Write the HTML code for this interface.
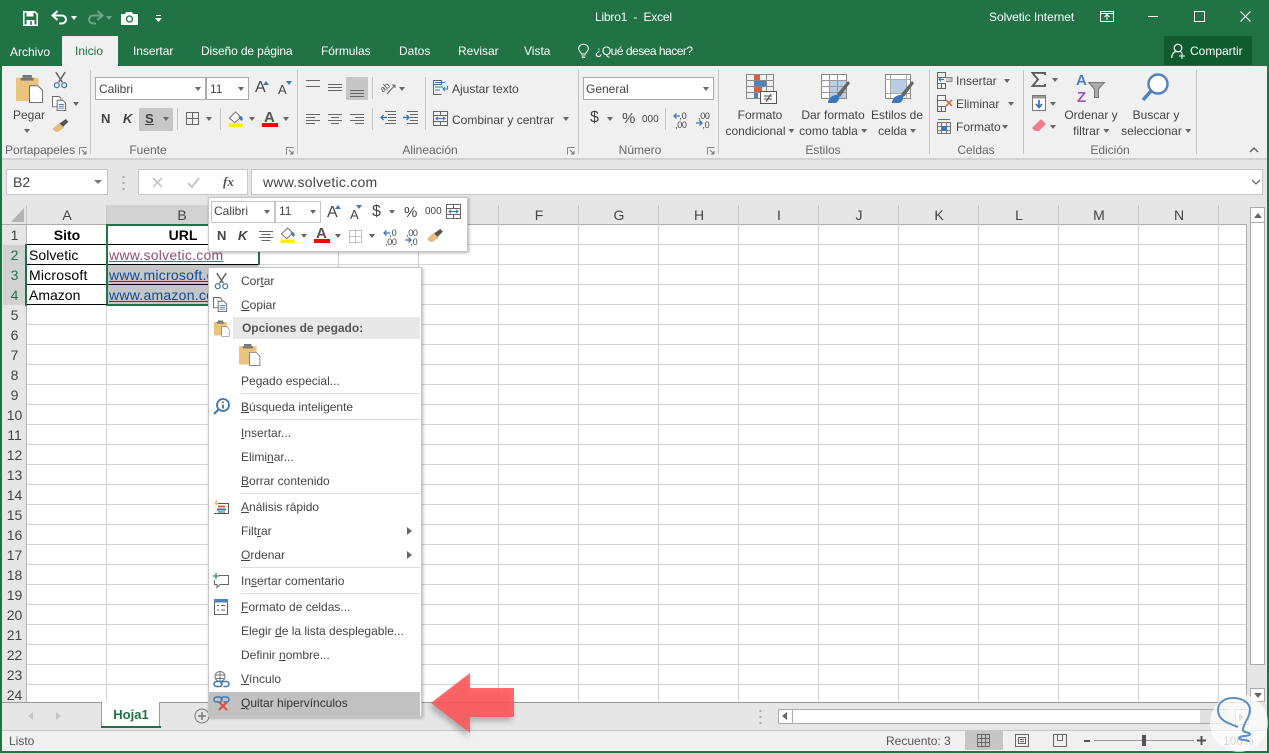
<!DOCTYPE html>
<html lang="es"><head><meta charset="utf-8"><title>Libro1 - Excel</title>
<style>
html,body{margin:0;padding:0;background:#fff}
#p{position:relative;width:1269px;height:753px;overflow:hidden;font:12px/16px "Liberation Sans",sans-serif;color:#444;background:#fff}
.a{position:absolute}
.t{position:absolute;white-space:nowrap}
.c{position:absolute;white-space:nowrap;text-align:center;transform:translateX(-50%)}
.w{color:#fff}
.s{position:absolute;width:1px;background:#c6c6c6}
.b{position:absolute;background:#fff;border:1px solid #ababab;box-sizing:border-box}
.d{position:absolute;width:0;height:0;border-left:3.5px solid transparent;border-right:3.5px solid transparent;border-top:4px solid #666}
.v{position:absolute;width:1px;background:#d4d4d4;top:224px;height:478px}
.r{position:absolute;left:3px;width:23px;height:19px;text-align:center;font-size:14px;line-height:21px;color:#444}
.m{position:absolute;left:241px;white-space:nowrap;color:#444;line-height:16px}
.hr{position:absolute;left:241px;width:179px;height:1px;background:#dcdcdc}
.cell{position:absolute;font-size:14px;line-height:20px;color:#000;white-space:nowrap}
svg{position:absolute;overflow:visible}
</style></head><body><div id="p">
<svg width="0" height="0"><defs>
<symbol id="sc" viewBox="0 0 16 18" overflow="visible"><path d="M3 0 L10 11 M13 0 L6 11" stroke="#666" stroke-width="1.6" fill="none"/><circle cx="4" cy="14" r="2.6" fill="none" stroke="#3e77b5" stroke-width="1.3"/><circle cx="12" cy="14" r="2.6" fill="none" stroke="#3e77b5" stroke-width="1.3"/></symbol>
<symbol id="cp" viewBox="0 0 16 16" overflow="visible"><path d="M.5 .5h7l2 2v9H.5z" fill="#fff" stroke="#666"/><path d="M5.5 4.5h6l3 3v8h-9z" fill="#fff" stroke="#666"/><path d="M7 9h6M7 11h6M7 13h6" stroke="#3e77b5"/></symbol>
<symbol id="pa" viewBox="0 0 30 30" overflow="visible"><path d="M0 3h24v25H0z" fill="#eac47f"/><path d="M7 3h10V0H7z" fill="#777"/><path d="M5 3h14v3H5z" fill="#777"/><path d="M14.500 11.500h9l5 5v13h-14z" fill="#fff" stroke="#666"/></symbol>
<symbol id="br" viewBox="0 0 18 16" overflow="visible"><path d="M0 11 L8 4 L13 10 L6 15 Q2 15 0 11z" fill="#e5bd7e"/><path d="M8 5 L15 0 L18 3 L12 9z" fill="#555"/></symbol>
<symbol id="fl" viewBox="0 0 18 18" overflow="visible"><path d="M1 8 L8 1 L14 7 L7 13z" fill="#fff" stroke="#666"/><path d="M11 6 q5-1 5 3 q0 2-2 2z" fill="#3e77b5"/><rect x="0" y="14" width="16" height="4" fill="#ffef00"/></symbol>
</defs></svg>

<!-- frame -->
<div class="a" style="left:0;top:0;width:1269px;height:66px;background:#217346"></div>
<!-- QAT -->
<svg style="left:23px;top:11px" width="15" height="15"><path d="M.8 .8h11l2.400 2.400v11H.8z" fill="none" stroke="#fff" stroke-width="1.600"/><path d="M3.500 1v4.500h7V1z" fill="#fff"/><path d="M3.500 14V9h8v5z" fill="#fff"/><path d="M8 10v4" stroke="#217346" stroke-width="1.500"/></svg>
<svg style="left:52px;top:11px" width="16" height="14"><path d="M1 4.500h9a4 4 0 0 1 0 8H7" fill="none" stroke="#fff" stroke-width="2"/><path d="M5.500 0 L.5 4.500 L5.500 9" fill="none" stroke="#fff" stroke-width="2"/></svg>
<div class="d" style="left:71px;top:16px;border-top-color:#fff"></div>
<svg style="left:87px;top:11px" width="16" height="14" opacity=".35"><path d="M15 4.500H6a4 4 0 0 0 0 8h3" fill="none" stroke="#fff" stroke-width="2"/><path d="M10.500 0 L15.500 4.500 L10.500 9" fill="none" stroke="#fff" stroke-width="2"/></svg>
<div class="d" style="left:106px;top:16px;border-top-color:#6fa98a"></div>
<svg style="left:121px;top:12px" width="17" height="13"><path d="M0 2h4l1-2h6l1 2h5v11H0z" fill="#fff"/><circle cx="8.500" cy="7" r="3" fill="#fff" stroke="#217346" stroke-width="1.300"/></svg>
<svg style="left:155px;top:15px" width="7" height="7"><path d="M1 .5h5" stroke="#fff"/><path d="M0 3h7L3.500 7z" fill="#fff"/></svg>
<div class="t w" style="left:595px;top:9px;letter-spacing:-.2px">Libro1&nbsp; -&nbsp; Excel</div>
<div class="t w" style="left:989px;top:9px;letter-spacing:-.05px">Solvetic Internet</div>
<svg style="left:1100px;top:11px" width="14" height="11"><path d="M.5 .5h13v10H.5z M.5 2.500h13" fill="none" stroke="#fff"/><path d="M7 9V4M4.500 6 7 3.500 9.500 6" fill="none" stroke="#fff"/></svg>
<div class="a" style="left:1148px;top:16px;width:10px;height:1px;background:#fff"></div>
<div class="a" style="left:1194px;top:11px;width:9px;height:9px;border:1px solid #fff"></div>
<svg style="left:1240px;top:11px" width="11" height="11"><path d="M.5 .5l10 10M10.500 .5l-10 10" stroke="#fff" stroke-width="1.100"/></svg>
<!-- tabs -->
<div class="t w" style="left:10px;top:44px">Archivo</div>
<div class="a" style="left:62px;top:36px;width:56px;height:30px;background:#f0f0f0"></div>
<div class="t" style="left:75px;top:43px;color:#217346">Inicio</div>
<div class="t w" style="left:133px;top:43px;letter-spacing:-.05px">Insertar</div>
<div class="t w" style="left:201px;top:43px;letter-spacing:-.12px">Diseño de página</div>
<div class="t w" style="left:321px;top:43px;letter-spacing:-.05px">Fórmulas</div>
<div class="t w" style="left:399px;top:43px">Datos</div>
<div class="t w" style="left:458px;top:43px">Revisar</div>
<div class="t w" style="left:524px;top:43px">Vista</div>
<svg style="left:578px;top:44px" width="11" height="14"><path d="M3.500 10C3 8 .6 7 .6 4.500a4.900 4.200 0 0 1 9.800 0C10.400 7 8 8 7.500 10z" fill="none" stroke="#fff"/><path d="M3.500 12h4M4 13.500h3" stroke="#fff"/></svg>
<div class="t w" style="left:595px;top:43px;letter-spacing:-.5px">¿Qué desea hacer?</div>
<div class="a" style="left:1164px;top:36px;width:88px;height:29px;background:#0f5c30"></div>
<svg style="left:1171px;top:43px" width="15" height="16"><circle cx="7" cy="5" r="3.800" fill="none" stroke="#fff" stroke-width="1.200"/><path d="M.8 15c0-4 2-6 4-6.500M9 8.500c1 .3 1.500.6 2 1.200" fill="none" stroke="#fff" stroke-width="1.200"/><path d="M8 13h6M11 10v6" stroke="#fff"/></svg>
<div class="t w" style="left:1190px;top:43px">Compartir</div>

<!-- ribbon -->
<div class="a" style="left:0;top:66px;width:1269px;height:92px;background:#f0f0f0"></div>
<div class="a" style="left:0;top:158px;width:1269px;height:2px;background:#d2d2d2"></div>
<div class="s" style="left:90px;top:70px;height:84px"></div>
<div class="s" style="left:297px;top:70px;height:84px"></div>
<div class="s" style="left:578px;top:70px;height:84px"></div>
<div class="s" style="left:718px;top:70px;height:84px"></div>
<div class="s" style="left:929px;top:70px;height:84px"></div>
<div class="s" style="left:1023px;top:70px;height:84px"></div>
<div class="s" style="left:1196px;top:70px;height:84px"></div>
<!-- clipboard -->
<svg style="left:16px;top:74px" width="28" height="30"><use href="#pa" width="28" height="30"/></svg>
<div class="t" style="left:13px;top:107px">Pegar</div>
<div class="d" style="left:24px;top:129px"></div>
<svg style="left:53px;top:72px" width="15" height="17"><use href="#sc" width="15" height="17"/></svg>
<svg style="left:52px;top:96px" width="15" height="15"><use href="#cp" width="15" height="15"/></svg>
<div class="d" style="left:73px;top:102px"></div>
<svg style="left:52px;top:119px" width="17" height="14"><use href="#br" width="17" height="14"/></svg>
<div class="t" style="left:5px;top:142px;color:#666;letter-spacing:-.05px">Portapapeles</div>
<svg style="left:79px;top:147px" width="8" height="8"><path d="M.5 .5h7M.500 .5v7" stroke="#888" fill="none"/><path d="M3 3l4 4M7 4v3H4" stroke="#777" fill="none"/></svg>
<!-- font -->
<div class="b" style="left:95px;top:77px;width:111px;height:23px"></div>
<div class="t" style="left:99px;top:81px">Calibri</div><div class="d" style="left:195px;top:87px"></div>
<div class="b" style="left:206px;top:77px;width:43px;height:23px"></div>
<div class="t" style="left:210px;top:81px">11</div><div class="d" style="left:238px;top:87px"></div>
<div class="t" style="left:255px;top:80px;font-size:16px">A</div><svg style="left:263px;top:81px" width="6" height="4"><path d="M0 4L3 0l3 4z" fill="#3e77b5"/></svg>
<div class="t" style="left:278px;top:82px;font-size:13px">A</div><svg style="left:286px;top:81px" width="6" height="4"><path d="M0 0l3 4 3-4z" fill="#3e77b5"/></svg>
<div class="t" style="left:101px;top:111px;font-weight:bold;font-size:13px">N</div>
<div class="t" style="left:123px;top:111px;font-weight:bold;font-style:italic;font-size:13px">K</div>
<div class="a" style="left:139px;top:108px;width:34px;height:23px;background:#c6c6c6"></div>
<div class="t" style="left:145px;top:111px;font-weight:bold;font-size:13px;text-decoration:underline">S</div>
<div class="d" style="left:163px;top:117px"></div>
<div class="s" style="left:177px;top:108px;height:22px"></div>
<svg style="left:186px;top:112px" width="13" height="13"><path d="M.5 .5h12v12H.5zM6.500 .5v12M.5 6.500h12" fill="none" stroke="#666"/></svg>
<div class="d" style="left:206px;top:117px"></div>
<div class="s" style="left:220px;top:108px;height:22px"></div>
<svg style="left:228px;top:111px" width="17" height="16"><use href="#fl" width="17" height="16"/></svg>
<div class="d" style="left:249px;top:117px"></div>
<div class="t" style="left:264px;top:110px;font-size:15px;font-weight:bold;color:#555">A</div>
<div class="a" style="left:262px;top:123px;width:16px;height:4px;background:#f00"></div>
<div class="d" style="left:283px;top:117px"></div>
<div class="t c" style="left:148px;top:142px;color:#666">Fuente</div>
<svg style="left:286px;top:147px" width="8" height="8"><path d="M.5 .5h7M.500 .5v7" stroke="#888" fill="none"/><path d="M3 3l4 4M7 4v3H4" stroke="#777" fill="none"/></svg>
<!-- align -->
<svg style="left:306px;top:77px" width="70" height="50">
<path d="M0 3.500h14M0 9.500h14" stroke="#666"/>
<path d="M22 7.500h14M22 10.500h14M22 13.500h14" stroke="#666"/>
<rect x="40" y="0" width="22" height="23" fill="#c6c6c6"/>
<path d="M44 13.500h14M44 16.500h14M44 19.500h14" stroke="#666"/>
<path d="M0 37.500h14M0 40.500h9M0 43.500h14M0 46.500h9" stroke="#666"/>
<path d="M22 37.500h14M25 40.500h8M22 43.500h14M25 46.500h8" stroke="#666"/>
<path d="M44 37.500h14M49 40.500h9M44 43.500h14M49 46.500h9" stroke="#666"/></svg>
<div class="s" style="left:372px;top:77px;height:22px"></div>
<div class="s" style="left:372px;top:108px;height:22px"></div>
<svg style="left:380px;top:80px" width="17" height="15"><text x="0" y="11" font-size="9" fill="#555" transform="rotate(-40 4 8)" font-family="Liberation Sans">ab</text><path d="M7 14 L15 5M12 5h3v3" stroke="#666" fill="none"/></svg>
<div class="d" style="left:399px;top:87px"></div>
<svg style="left:380px;top:111px" width="39" height="14">
<path d="M5 .5h11M8 3.500h8M8 6.500h8M8 9.500h8M5 12.500h11" stroke="#666"/><path d="M7 6.500H1M3.500 4L1 6.500 3.500 9" stroke="#3e77b5" fill="none" stroke-width="1.400"/>
<path d="M27 .5h11M30 3.500h8M30 6.500h8M30 9.500h8M27 12.500h11" stroke="#666"/><path d="M23 6.500h6M26.500 4L29 6.500 26.500 9" stroke="#3e77b5" fill="none" stroke-width="1.400"/></svg>
<div class="s" style="left:425px;top:77px;height:53px"></div>
<svg style="left:433px;top:80px" width="16" height="15"><path d="M.5 .5h8v4h-8zM.5 4.500v10h8" fill="none" stroke="#666"/><path d="M2 2.500h10M2 7h8M2 10h5" stroke="#3e77b5"/><path d="M14.500 6v3H10M12 7l-2 2 2 2" stroke="#3e77b5" fill="none"/></svg>
<div class="t" style="left:452px;top:81px">Ajustar texto</div>
<svg style="left:433px;top:111px" width="15" height="15"><path d="M.5 .5h14v14H.5zM.5 4.500h14M.5 10.500h14M7.500 .5v4M7.500 10.500v4" fill="none" stroke="#666"/><path d="M3 7.500h9M5 5.800L3 7.500l2 1.700M10 5.800l2 1.700-2 1.700" stroke="#3e77b5" fill="none"/></svg>
<div class="t" style="left:452px;top:112px">Combinar y centrar</div>
<div class="d" style="left:563px;top:117px"></div>
<div class="t c" style="left:430px;top:142px;color:#666">Alineación</div>
<svg style="left:567px;top:147px" width="8" height="8"><path d="M.5 .5h7M.500 .5v7" stroke="#888" fill="none"/><path d="M3 3l4 4M7 4v3H4" stroke="#777" fill="none"/></svg>
<!-- number -->
<div class="b" style="left:583px;top:77px;width:131px;height:23px"></div>
<div class="t" style="left:586px;top:81px">General</div><div class="d" style="left:703px;top:87px"></div>
<div class="t" style="left:590px;top:110px;font-size:16px">$</div><div class="d" style="left:607px;top:117px"></div>
<div class="t" style="left:622px;top:111px;font-size:15px">%</div>
<div class="t" style="left:642px;top:112px;font-size:10px">000</div>
<div class="s" style="left:665px;top:108px;height:22px"></div>
<div class="t" style="left:675px;top:112px;font-size:9px;line-height:9px;letter-spacing:-.3px">&nbsp;&nbsp;,0<br>,00</div>
<svg style="left:673px;top:113px" width="8" height="6"><path d="M7 3H1M3.500.5L1 3l2.500 2.500" stroke="#3e77b5" fill="none" stroke-width="1.300"/></svg>
<div class="t" style="left:698px;top:112px;font-size:9px;line-height:9px;letter-spacing:-.3px">,00<br>&nbsp;&nbsp;,0</div>
<svg style="left:695px;top:120px" width="8" height="6"><path d="M1 3h6M4.500.5L7 3 4.500 5.500" stroke="#3e77b5" fill="none" stroke-width="1.300"/></svg>
<div class="t c" style="left:640px;top:142px;color:#666">Número</div>
<svg style="left:707px;top:147px" width="8" height="8"><path d="M.5 .5h7M.500 .5v7" stroke="#888" fill="none"/><path d="M3 3l4 4M7 4v3H4" stroke="#777" fill="none"/></svg>
<!-- styles -->
<svg style="left:746px;top:74px" width="31" height="30"><path d="M.5 .5h27v24H.5zM.5 6.500h27M.5 12.500h27M.5 18.500h27M8.500 .5v24M20.500 .5v24" fill="none" stroke="#888"/><rect x="8" y="1" width="6" height="5" fill="#d9603b"/><rect x="8" y="7" width="12" height="5" fill="#4f81bd"/><rect x="8" y="13" width="8" height="5" fill="#d9603b"/><rect x="8" y="19" width="4" height="5" fill="#4f81bd"/><rect x="14.500" y="17.500" width="16" height="12" fill="#fff" stroke="#555"/><path d="M18 22h8M18 25h8M25 20l-5 8" stroke="#444"/></svg>
<div class="c" style="left:760px;top:107px;line-height:16px">Formato<br>condicional<span style="display:inline-block;width:0;height:0;margin-left:3px;border-left:3px solid transparent;border-right:3px solid transparent;border-top:4px solid #666;vertical-align:2px"></span></div>
<svg style="left:821px;top:74px" width="30" height="30"><rect x=".5" y=".5" width="25" height="24" fill="#fff" stroke="#888"/><rect x="8" y="6" width="17" height="18" fill="#b9cde5"/><path d="M.5 6.500h25M.5 12.500h25M.5 18.500h25M8.500 .5v24M16.500 .5v24" stroke="#999" fill="none"/><path d="M16 20 L27 7 L29 9 L19 23z" fill="#666"/><path d="M7 29c0-5 5-9 11-8 1 3-1 8-4 8z" fill="#3e77b5"/></svg>
<div class="c" style="left:833px;top:107px;line-height:16px">Dar formato<br>como tabla<span style="display:inline-block;width:0;height:0;margin-left:3px;border-left:3px solid transparent;border-right:3px solid transparent;border-top:4px solid #666;vertical-align:2px"></span></div>
<svg style="left:885px;top:74px" width="30" height="30"><rect x=".5" y=".5" width="25" height="24" fill="#fff" stroke="#888"/><rect x="5" y="5" width="17" height="14" fill="#b9cde5"/><path d="M.5 5.500h25M.5 19.500h25M5.500 .5v24M21.500 .5v24" stroke="#aaa" fill="none"/><path d="M16 20 L27 7 L29 9 L19 23z" fill="#666"/><path d="M7 29c0-5 5-9 11-8 1 3-1 8-4 8z" fill="#3e77b5"/></svg>
<div class="c" style="left:897px;top:107px;line-height:16px">Estilos de<br>celda<span style="display:inline-block;width:0;height:0;margin-left:3px;border-left:3px solid transparent;border-right:3px solid transparent;border-top:4px solid #666;vertical-align:2px"></span></div>
<div class="t c" style="left:823px;top:142px;color:#666">Estilos</div>
<!-- cells -->
<svg style="left:937px;top:72px" width="16" height="17"><path d="M.5 .5h8v5h-8zM.5 11.500h8v5h-8zM.5 5.500v6M4.500 11.500v5" fill="none" stroke="#666"/><path d="M9 5.500h6v4H9" fill="#ccc" stroke="#888"/><path d="M7 7.500H2M4 5.500l-2 2 2 2" stroke="#3e77b5" fill="none"/></svg>
<div class="t" style="left:956px;top:73px">Insertar</div><div class="d" style="left:1004px;top:79px"></div>
<svg style="left:937px;top:95px" width="16" height="17"><path d="M.5 .5h8v5h-8zM.5 11.500h8v5h-8zM.5 5.500v6M4.500 11.500v5" fill="none" stroke="#666"/><path d="M9 5l6 6M15 5l-6 6" stroke="#d9603b" stroke-width="1.500"/></svg>
<div class="t" style="left:956px;top:96px">Eliminar</div><div class="d" style="left:1008px;top:102px"></div>
<svg style="left:937px;top:118px" width="15" height="16"><path d="M.5 4.500h13v11H.5zM.5 8.500h13M.5 12.500h13M4.500 4.500v11M9.500 4.500v11" fill="none" stroke="#777"/><rect x="5" y="8" width="5" height="5" fill="#3e77b5"/><path d="M1 1.500h12" stroke="#3e77b5"/></svg>
<div class="t" style="left:956px;top:119px">Formato</div><div class="d" style="left:1002px;top:125px"></div>
<div class="t c" style="left:976px;top:142px;color:#666">Celdas</div>
<!-- edit -->
<svg style="left:1031px;top:72px" width="15" height="15"><path d="M14 3V.9H1.500L7 7.500 1.500 14H14v-2" fill="none" stroke="#555" stroke-width="1.800"/></svg>
<div class="d" style="left:1052px;top:78px"></div>
<svg style="left:1032px;top:95px" width="14" height="16"><rect x=".5" y=".5" width="13" height="15" fill="#fff" stroke="#777"/><rect x="1" y="1" width="12" height="2.500" fill="#999"/><path d="M7 5v7M4 9l3 3.500L10 9" fill="none" stroke="#3e77b5" stroke-width="1.800"/></svg>
<div class="d" style="left:1050px;top:102px"></div>
<svg style="left:1032px;top:119px" width="14" height="13"><path d="M0 9 L8 1 Q9 0 10 1 L13 4 Q14 5 13 6 L7 12 H3z" fill="#ee7c8c"/></svg>
<div class="d" style="left:1050px;top:125px"></div>
<div class="t" style="left:1076px;top:73px;font-size:15px;font-weight:bold;color:#4f81bd">A</div>
<div class="t" style="left:1077px;top:90px;font-size:15px;font-weight:bold;color:#9b59b6;line-height:15px">Z</div>
<svg style="left:1088px;top:82px" width="18" height="16"><path d="M.5 .5h16L10.500 7v8.500h-4V7z" fill="#aaa" stroke="#777"/></svg>
<div class="c" style="left:1091px;top:107px;line-height:16px">Ordenar y<br>filtrar<span style="display:inline-block;width:0;height:0;margin-left:3px;border-left:3px solid transparent;border-right:3px solid transparent;border-top:4px solid #666;vertical-align:2px"></span></div>
<svg style="left:1141px;top:73px" width="29" height="29"><circle cx="17" cy="11" r="9.500" fill="#fff" stroke="#4f81bd" stroke-width="2.400"/><path d="M10 18 L2 27" stroke="#4f81bd" stroke-width="3.500"/></svg>
<div class="c" style="left:1156px;top:107px;line-height:16px">Buscar y<br>seleccionar<span style="display:inline-block;width:0;height:0;margin-left:3px;border-left:3px solid transparent;border-right:3px solid transparent;border-top:4px solid #666;vertical-align:2px"></span></div>
<div class="t c" style="left:1110px;top:142px;color:#666">Edición</div>
<svg style="left:1249px;top:147px" width="10" height="6"><path d="M1 5l4-4 4 4" fill="none" stroke="#666" stroke-width="1.500"/></svg>

<!-- formula bar -->
<div class="a" style="left:0;top:160px;width:1269px;height:45px;background:#e6e6e6"></div>
<div class="b" style="left:6px;top:169px;width:102px;height:26px;border-color:#c6c6c6"></div>
<div class="t" style="left:13px;top:174px;font-size:14px">B2</div>
<div class="d" style="left:94px;top:180px;border-left-width:4px;border-right-width:4px;border-top-width:4px;border-top-color:#777"></div>
<svg style="left:122px;top:176px" width="3" height="14"><path d="M1.500 0v2M1.500 6v2M1.500 12v2" stroke="#aaa" stroke-width="2"/></svg>
<div class="b" style="left:138px;top:169px;width:110px;height:26px;border-color:#c6c6c6"></div>
<svg style="left:152px;top:177px" width="11" height="11"><path d="M1 1l9 9M10 1l-9 9" stroke="#c6c6c6" stroke-width="1.600"/></svg>
<svg style="left:187px;top:177px" width="13" height="11"><path d="M1 6l4 4 7-9" fill="none" stroke="#c6c6c6" stroke-width="2"/></svg>
<div class="t" style="left:223px;top:173px;font:italic bold 13px/18px 'Liberation Serif',serif;color:#555">fx</div>
<div class="b" style="left:251px;top:169px;width:1012px;height:26px;border-color:#c6c6c6"></div>
<div class="t" style="left:263px;top:174px;font-size:14px;letter-spacing:.25px">www.solvetic.com</div>
<svg style="left:1251px;top:179px" width="10" height="6"><path d="M1 1l4 4 4-4" fill="none" stroke="#666" stroke-width="1.300"/></svg>

<!-- sheet -->
<div class="a" style="left:0;top:205px;width:1269px;height:20px;background:#e6e6e6"></div>
<div class="a" style="left:0;top:205px;width:27px;height:498px;background:#e6e6e6"></div>
<div class="a" style="left:27px;top:224px;width:1220px;height:478px;background:repeating-linear-gradient(to bottom,#d4d4d4 0,#d4d4d4 1px,#fff 1px,#fff 20px)"></div>
<div class="a" style="left:107px;top:205px;width:151px;height:19px;background:#d2d2d2"></div>
<div class="a" style="left:3px;top:245px;width:23px;height:60px;background:#d2d2d2"></div>
<div class="a" style="left:26px;top:205px;width:1px;height:498px;background:#b4b4b4"></div>
<div class="a" style="left:0;top:224px;width:1247px;height:1px;background:#ababab"></div>
<div class="a" style="left:1246px;top:224px;width:1px;height:478px;background:#ababab"></div>
<svg style="left:11px;top:208px" width="13" height="14"><path d="M13 0v14H0z" fill="#b4b4b4"/></svg>
<div class="v" style="left:106px"></div><div class="v" style="left:258px"></div><div class="v" style="left:338px"></div><div class="v" style="left:418px"></div><div class="v" style="left:498px"></div><div class="v" style="left:578px"></div><div class="v" style="left:658px"></div><div class="v" style="left:738px"></div><div class="v" style="left:818px"></div><div class="v" style="left:898px"></div><div class="v" style="left:978px"></div><div class="v" style="left:1058px"></div><div class="v" style="left:1138px"></div><div class="v" style="left:1218px"></div>
<div class="s" style="left:26px;top:205px;height:19px"></div><div class="s" style="left:106px;top:205px;height:19px"></div><div class="s" style="left:498px;top:205px;height:19px"></div><div class="s" style="left:578px;top:205px;height:19px"></div><div class="s" style="left:658px;top:205px;height:19px"></div><div class="s" style="left:738px;top:205px;height:19px"></div><div class="s" style="left:818px;top:205px;height:19px"></div><div class="s" style="left:898px;top:205px;height:19px"></div><div class="s" style="left:978px;top:205px;height:19px"></div><div class="s" style="left:1058px;top:205px;height:19px"></div><div class="s" style="left:1138px;top:205px;height:19px"></div><div class="s" style="left:1218px;top:205px;height:19px"></div>
<div class="c" style="left:67px;top:207px;font-size:14px">A</div><div class="c" style="left:182px;top:207px;font-size:14px">B</div><div class="c" style="left:539px;top:207px;font-size:14px">F</div><div class="c" style="left:619px;top:207px;font-size:14px">G</div><div class="c" style="left:699px;top:207px;font-size:14px">H</div><div class="c" style="left:779px;top:207px;font-size:14px">I</div><div class="c" style="left:859px;top:207px;font-size:14px">J</div><div class="c" style="left:939px;top:207px;font-size:14px">K</div><div class="c" style="left:1019px;top:207px;font-size:14px">L</div><div class="c" style="left:1099px;top:207px;font-size:14px">M</div><div class="c" style="left:1179px;top:207px;font-size:14px">N</div>
<div class="r" style="top:225px">1</div><div class="r" style="top:245px;color:#217346">2</div><div class="r" style="top:265px;color:#217346">3</div><div class="r" style="top:285px;color:#217346">4</div><div class="r" style="top:305px">5</div><div class="r" style="top:325px">6</div><div class="r" style="top:345px">7</div><div class="r" style="top:365px">8</div><div class="r" style="top:385px">9</div><div class="r" style="top:405px">10</div><div class="r" style="top:425px">11</div><div class="r" style="top:445px">12</div><div class="r" style="top:465px">13</div><div class="r" style="top:485px">14</div><div class="r" style="top:505px">15</div><div class="r" style="top:525px">16</div><div class="r" style="top:545px">17</div><div class="r" style="top:565px">18</div><div class="r" style="top:585px">19</div><div class="r" style="top:605px">20</div><div class="r" style="top:625px">21</div><div class="r" style="top:645px">22</div><div class="r" style="top:665px">23</div><div class="r" style="top:685px">24</div>
<!-- table cells -->
<div class="a" style="left:108px;top:265px;width:150px;height:39px;background:#c6c6c6"></div>
<div class="a" style="left:27px;top:244px;width:231px;height:1px;background:#000"></div>
<div class="a" style="left:27px;top:264px;width:231px;height:1px;background:#000"></div>
<div class="a" style="left:27px;top:284px;width:231px;height:1px;background:#000"></div>
<div class="a" style="left:27px;top:304px;width:80px;height:1px;background:#000"></div>
<div class="a" style="left:106px;top:225px;width:1px;height:20px;background:#000"></div>
<div class="cell" style="left:67px;top:225px;transform:translateX(-50%);font-weight:bold">Sito</div>
<div class="cell" style="left:183px;top:225px;transform:translateX(-50%);font-weight:bold">URL</div>
<div class="cell" style="left:29px;top:245px;letter-spacing:.05px">Solvetic</div>
<div class="cell" style="left:29px;top:265px;letter-spacing:.2px">Microsoft</div>
<div class="cell" style="left:29px;top:285px">Amazon</div>
<div class="cell" style="left:109px;top:245px;color:#954f72;text-decoration:underline;letter-spacing:.25px">www.solvetic.com</div>
<div class="cell" style="left:109px;top:265px;color:#0b4a9e;text-decoration:underline;letter-spacing:.25px">www.microsoft.com</div>
<div class="cell" style="left:109px;top:285px;color:#0b4a9e;text-decoration:underline;letter-spacing:.25px">www.amazon.com</div>
<!-- selection -->
<div class="a" style="left:25px;top:244px;width:2px;height:62px;background:#217346"></div>
<div class="a" style="left:106px;top:224px;width:2px;height:82px;background:#217346"></div>
<div class="a" style="left:106px;top:224px;width:153px;height:2px;background:#217346"></div>
<div class="a" style="left:258px;top:224px;width:2px;height:41px;background:#217346"></div>
<div class="a" style="left:106px;top:304px;width:110px;height:2px;background:#217346"></div>

<!-- v scrollbar -->
<div class="a" style="left:1247px;top:205px;width:20px;height:498px;background:#e6e6e6"></div>
<div class="b" style="left:1250px;top:207px;width:15px;height:16px;border-color:#ababab"></div>
<svg style="left:1254px;top:213px" width="8" height="5"><path d="M0 5l4-5 4 5z" fill="#666"/></svg>
<div class="a" style="left:1250px;top:222px;width:15px;height:443px;background:#fff;border:1px solid #ababab;box-sizing:border-box"></div>
<div class="b" style="left:1250px;top:688px;width:15px;height:14px;border-color:#ababab"></div>
<svg style="left:1254px;top:693px" width="8" height="5"><path d="M0 0l4 5 4-5z" fill="#666"/></svg>

<!-- tabs bottom -->
<div class="a" style="left:0;top:703px;width:1269px;height:27px;background:#e6e6e6"></div>
<div class="a" style="left:0;top:702px;width:1247px;height:1px;background:#9a9a9a"></div>
<svg style="left:28px;top:712px" width="34" height="8"><path d="M5 0L0 4l5 4z" fill="#c6c6c6"/><path d="M28 0l5 4-5 4z" fill="#c6c6c6"/></svg>
<div class="a" style="left:101px;top:702px;width:59px;height:26px;background:#fff;border-left:1px solid #9a9a9a;border-right:1px solid #9a9a9a;box-sizing:border-box"></div>
<div class="a" style="left:101px;top:726px;width:60px;height:2px;background:#217346"></div>
<div class="c" style="left:131px;top:707px;font-weight:bold;color:#217346;font-size:13px">Hoja1</div>
<svg style="left:194px;top:708px" width="16" height="16"><circle cx="8" cy="8" r="7" fill="none" stroke="#777"/><path d="M8 4v8M4 8h8" stroke="#777" stroke-width="1.500"/></svg>
<svg style="left:759px;top:710px" width="3" height="14"><path d="M1.500 0v2M1.500 6v2M1.500 12v2" stroke="#aaa" stroke-width="2"/></svg>
<div class="a" style="left:778px;top:709px;width:452px;height:15px;background:#fff;border:1px solid #ababab;box-sizing:border-box"></div>
<svg style="left:782px;top:712px" width="6" height="8"><path d="M5 0L0 4l5 4z" fill="#666"/></svg>
<div class="a" style="left:792px;top:709px;width:1px;height:15px;background:#ababab"></div>
<div class="a" style="left:1200px;top:710px;width:30px;height:13px;background:#e0e0e0"></div>
<div class="b" style="left:1235px;top:709px;width:14px;height:16px;border-color:#ababab"></div>
<svg style="left:1239px;top:713px" width="6" height="8"><path d="M0 0l5 4-5 4z" fill="#888"/></svg>

<!-- status -->
<div class="a" style="left:0;top:730px;width:1269px;height:20px;background:#f0f0f0;border-top:1px solid #c6c6c6;box-sizing:border-box"></div>
<div class="t" style="left:9px;top:733px;color:#555">Listo</div>
<div class="t" style="left:886px;top:733px;color:#555">Recuento: 3</div>
<div class="a" style="left:965px;top:731px;width:38px;height:19px;background:#c6c6c6"></div>
<svg style="left:977px;top:734px" width="13" height="13"><path d="M.5 .5h12v12H.5zM4.500 .5v12M8.500 .5v12M.5 4.500h12M.5 8.500h12" fill="none" stroke="#666"/></svg>
<svg style="left:1015px;top:734px" width="14" height="13"><path d="M.5 .5h13v12H.5zM3.500 3.500h7v6h-7zM5 5.500h4M5 7.500h4" fill="none" stroke="#666"/></svg>
<svg style="left:1053px;top:734px" width="14" height="13"><path d="M.5 .5h13v12H.5zM4.500 .5v6h5v-6" fill="none" stroke="#666"/></svg>
<div class="a" style="left:1084px;top:740px;width:6px;height:2px;background:#555"></div>
<div class="a" style="left:1094px;top:740px;width:100px;height:1px;background:#999"></div>
<div class="a" style="left:1142px;top:735px;width:4px;height:11px;background:#555"></div>
<svg style="left:1197px;top:736px" width="9" height="9"><path d="M0 4.500h9M4.500 0v9" stroke="#555" stroke-width="2"/></svg>
<div class="t" style="left:1223px;top:733px;color:#777">100%</div>

<!-- window border -->
<div class="a" style="left:0;top:66px;width:2px;height:687px;background:#217346"></div>
<div class="a" style="left:1267px;top:66px;width:2px;height:687px;background:#217346"></div>
<div class="a" style="left:0;top:751px;width:1269px;height:2px;background:#217346"></div>

<!-- mini toolbar -->
<div class="a" style="left:208px;top:197px;width:260px;height:55px;background:#fff;border:1px solid #c6c6c6;box-sizing:border-box;box-shadow:1px 1px 3px rgba(0,0,0,.3)"></div>
<div class="b" style="left:211px;top:201px;width:64px;height:22px;border-color:#c6c6c6"></div>
<div class="t" style="left:214px;top:203px">Calibri</div><div class="d" style="left:264px;top:210px"></div>
<div class="b" style="left:275px;top:201px;width:46px;height:22px;border-color:#c6c6c6"></div>
<div class="t" style="left:279px;top:203px">11</div><div class="d" style="left:310px;top:210px"></div>
<div class="t" style="left:327px;top:205px;font-size:16px">A</div><svg style="left:335px;top:205px" width="6" height="4"><path d="M0 4L3 0l3 4z" fill="#3e77b5"/></svg>
<div class="t" style="left:350px;top:207px;font-size:13px">A</div><svg style="left:356px;top:205px" width="6" height="4"><path d="M0 0l3 4 3-4z" fill="#3e77b5"/></svg>
<div class="t" style="left:372px;top:204px;font-size:16px">$</div><div class="d" style="left:389px;top:210px"></div>
<div class="t" style="left:404px;top:205px;font-size:15px">%</div>
<div class="t" style="left:425px;top:204px;font-size:10px">000</div>
<svg style="left:446px;top:204px" width="15" height="15"><path d="M.5 .5h14v14H.5zM.5 4.500h14M.5 10.500h14M7.500 .5v4M7.500 10.500v4" fill="none" stroke="#666"/><path d="M3 7.500h9M5 5.800L3 7.500l2 1.700M10 5.800l2 1.700-2 1.700" stroke="#3e77b5" fill="none"/></svg>
<div class="t" style="left:217px;top:228px;font-weight:bold;font-size:13px">N</div>
<div class="t" style="left:238px;top:228px;font-weight:bold;font-style:italic;font-size:13px">K</div>
<svg style="left:259px;top:231px" width="14" height="11"><path d="M0 .5h14M2.500 3.500h9M0 6.500h14M2.500 9.500h9" stroke="#666"/></svg>
<svg style="left:280px;top:227px" width="17" height="16"><use href="#fl" width="17" height="16"/></svg>
<div class="d" style="left:301px;top:234px"></div>
<div class="t" style="left:316px;top:226px;font-size:15px;font-weight:bold;color:#555">A</div>
<div class="a" style="left:314px;top:239px;width:16px;height:4px;background:#f00"></div>
<div class="d" style="left:335px;top:234px"></div>
<svg style="left:349px;top:230px" width="13" height="13"><path d="M.5 .5h12v12H.5zM6.500 .5v12M.5 6.500h12" fill="none" stroke="#888" stroke-dasharray="1 1"/></svg>
<div class="d" style="left:369px;top:234px"></div>
<div class="t" style="left:385px;top:229px;font-size:9px;line-height:9px;letter-spacing:-.3px">&nbsp;&nbsp;,0<br>,00</div>
<svg style="left:383px;top:230px" width="8" height="6"><path d="M7 3H1M3.500.5L1 3l2.500 2.500" stroke="#3e77b5" fill="none" stroke-width="1.300"/></svg>
<div class="t" style="left:406px;top:229px;font-size:9px;line-height:9px;letter-spacing:-.3px">,00<br>&nbsp;&nbsp;,0</div>
<svg style="left:404px;top:237px" width="8" height="6"><path d="M1 3h6M4.500.5L7 3 4.500 5.500" stroke="#3e77b5" fill="none" stroke-width="1.300"/></svg>
<svg style="left:427px;top:229px" width="16" height="14"><use href="#br" width="16" height="14"/></svg>

<!-- context menu -->
<div class="a" style="left:208px;top:267px;width:214px;height:450px;background:#fff;border:1px solid #c6c6c6;box-sizing:border-box;box-shadow:1px 1px 3px rgba(0,0,0,.3)"></div>
<svg style="left:214px;top:273px" width="15" height="17"><use href="#sc" width="15" height="17"/></svg>
<div class="m" style="top:273px">Cor<u>t</u>ar</div>
<svg style="left:213px;top:297px" width="15" height="15"><use href="#cp" width="15" height="15"/></svg>
<div class="m" style="top:297px"><u>C</u>opiar</div>
<div class="a" style="left:233px;top:317px;width:187px;height:22px;background:#e8e8e8"></div>
<svg style="left:214px;top:320px" width="16" height="17"><use href="#pa" width="16" height="17"/></svg>
<div class="m" style="top:320px;left:242px;font-weight:bold;color:#555;letter-spacing:-.05px">Opciones de pegado:</div>
<svg style="left:239px;top:343px" width="22" height="24"><use href="#pa" width="22" height="24"/></svg>
<div class="m" style="top:373px">Pe<u>g</u>ado especial...</div>
<div class="hr" style="top:393px"></div>
<svg style="left:213px;top:398px" width="17" height="17"><circle cx="10" cy="7" r="6" fill="#fff" stroke="#3e77b5" stroke-width="1.800"/><path d="M5.500 11.500L1 16" stroke="#3e77b5" stroke-width="2.200"/><path d="M10 3.500v1.500M10 6.500v4" stroke="#555" stroke-width="1.600"/></svg>
<div class="m" style="top:399px"><u>B</u>úsqueda inteligente</div>
<div class="hr" style="top:419px"></div>
<div class="m" style="top:425px"><u>I</u>nsertar...</div>
<div class="m" style="top:449px">Elimi<u>n</u>ar...</div>
<div class="m" style="top:473px"><u>B</u>orrar contenido</div>
<div class="hr" style="top:493px"></div>
<svg style="left:213px;top:499px" width="16" height="15"><path d="M3 4.500h12.500v10H1" fill="none" stroke="#555"/><path d="M5 7.500h7" stroke="#d9603b" stroke-width="2"/><path d="M4 10.500h9" stroke="#3e77b5" stroke-width="2"/><path d="M5 13h7" stroke="#6aa08a" stroke-width="1.500"/><path d="M4 0L1 5h2L1.500 9 6 3.500H4z" fill="#eac47f"/></svg>
<div class="m" style="top:499px"><u>A</u>nálisis rápido</div>
<div class="m" style="top:523px">Filt<u>r</u>ar</div>
<svg style="left:407px;top:527px" width="5" height="8"><path d="M0 0l5 4-5 4z" fill="#666"/></svg>
<div class="m" style="top:547px"><u>O</u>rdenar</div>
<svg style="left:407px;top:551px" width="5" height="8"><path d="M0 0l5 4-5 4z" fill="#666"/></svg>
<div class="hr" style="top:567px"></div>
<svg style="left:213px;top:573px" width="16" height="16"><path d="M6 2.500h9.500v9H7l-3 3v-3H1.500V7" fill="none" stroke="#666"/><path d="M3 0v6M0 3h6" stroke="#4f9a7c" stroke-width="1.500"/></svg>
<div class="m" style="top:573px">In<u>s</u>ertar comentario</div>
<div class="hr" style="top:593px"></div>
<svg style="left:214px;top:599px" width="14" height="16"><rect x=".5" y=".5" width="13" height="15" fill="#fff" stroke="#666"/><rect x="0" y="0" width="14" height="3.500" fill="#4f81bd"/><path d="M3 6.500h2M7 6.500h4M3 11h2M7 11h4" stroke="#666"/></svg>
<div class="m" style="top:599px"><u>F</u>ormato de celdas...</div>
<div class="m" style="top:623px">Elegir <u>d</u>e la lista desplegable...</div>
<div class="m" style="top:647px">Definir <u>n</u>ombre...</div>
<svg style="left:213px;top:671px" width="16" height="16"><circle cx="7" cy="5.500" r="5" fill="none" stroke="#777"/><path d="M2 4h10M2 7.500h10M7 .5v10" stroke="#777"/><path d="M1 13a2.500 2.500 0 0 1 2.500-2.500h3a2.500 2.500 0 0 1 0 5h-3A2.500 2.500 0 0 1 1 13zM8 13a2.500 2.500 0 0 1 2.500-2.500h3a2.500 2.500 0 0 1 0 5h-3" fill="none" stroke="#3e77b5" stroke-width="1.500"/></svg>
<div class="m" style="top:671px"><u>V</u>ínculo</div>
<div class="a" style="left:209px;top:692px;width:211px;height:24px;background:#c1c1c1"></div>
<svg style="left:213px;top:696px" width="17" height="15"><path d="M1 3.500A2.500 2.500 0 0 1 3.500 1h3a2.500 2.500 0 0 1 0 5h-3A2.500 2.500 0 0 1 1 3.500zM8 3.500A2.500 2.500 0 0 1 10.500 1h3a2.500 2.500 0 0 1 0 5h-3" fill="none" stroke="#3e77b5" stroke-width="1.500"/><path d="M6 6l8 8M14 6l-8 8" stroke="#d9503b" stroke-width="2"/></svg>
<div class="m" style="top:695px;color:#333"><u>Q</u>uitar hipervínculos</div>

<!-- arrow -->
<svg style="left:420px;top:665px;filter:drop-shadow(-2px 4px 3px rgba(0,0,0,.28))" width="105" height="80"><path d="M11 38 L50 8 V23 H94 V52 H50 V68z" fill="#ff5458" fill-opacity=".88"/></svg>

<!-- watermark -->
<svg style="left:1205px;top:690px" width="64" height="63"><circle cx="34" cy="33" r="29" fill="#fff" fill-opacity=".72"/><path d="M33 37C22 33 13 30 13 20C13 12 20 8 28 8C38 8 45 13 45 20C45 28 38 33 38 40C38 43 45 42 45 44C45 47 35 45 34 48C34 51 44 49 44 52" fill="none" stroke="#5b8fc7" stroke-width="2"/></svg>
</div></body></html>
